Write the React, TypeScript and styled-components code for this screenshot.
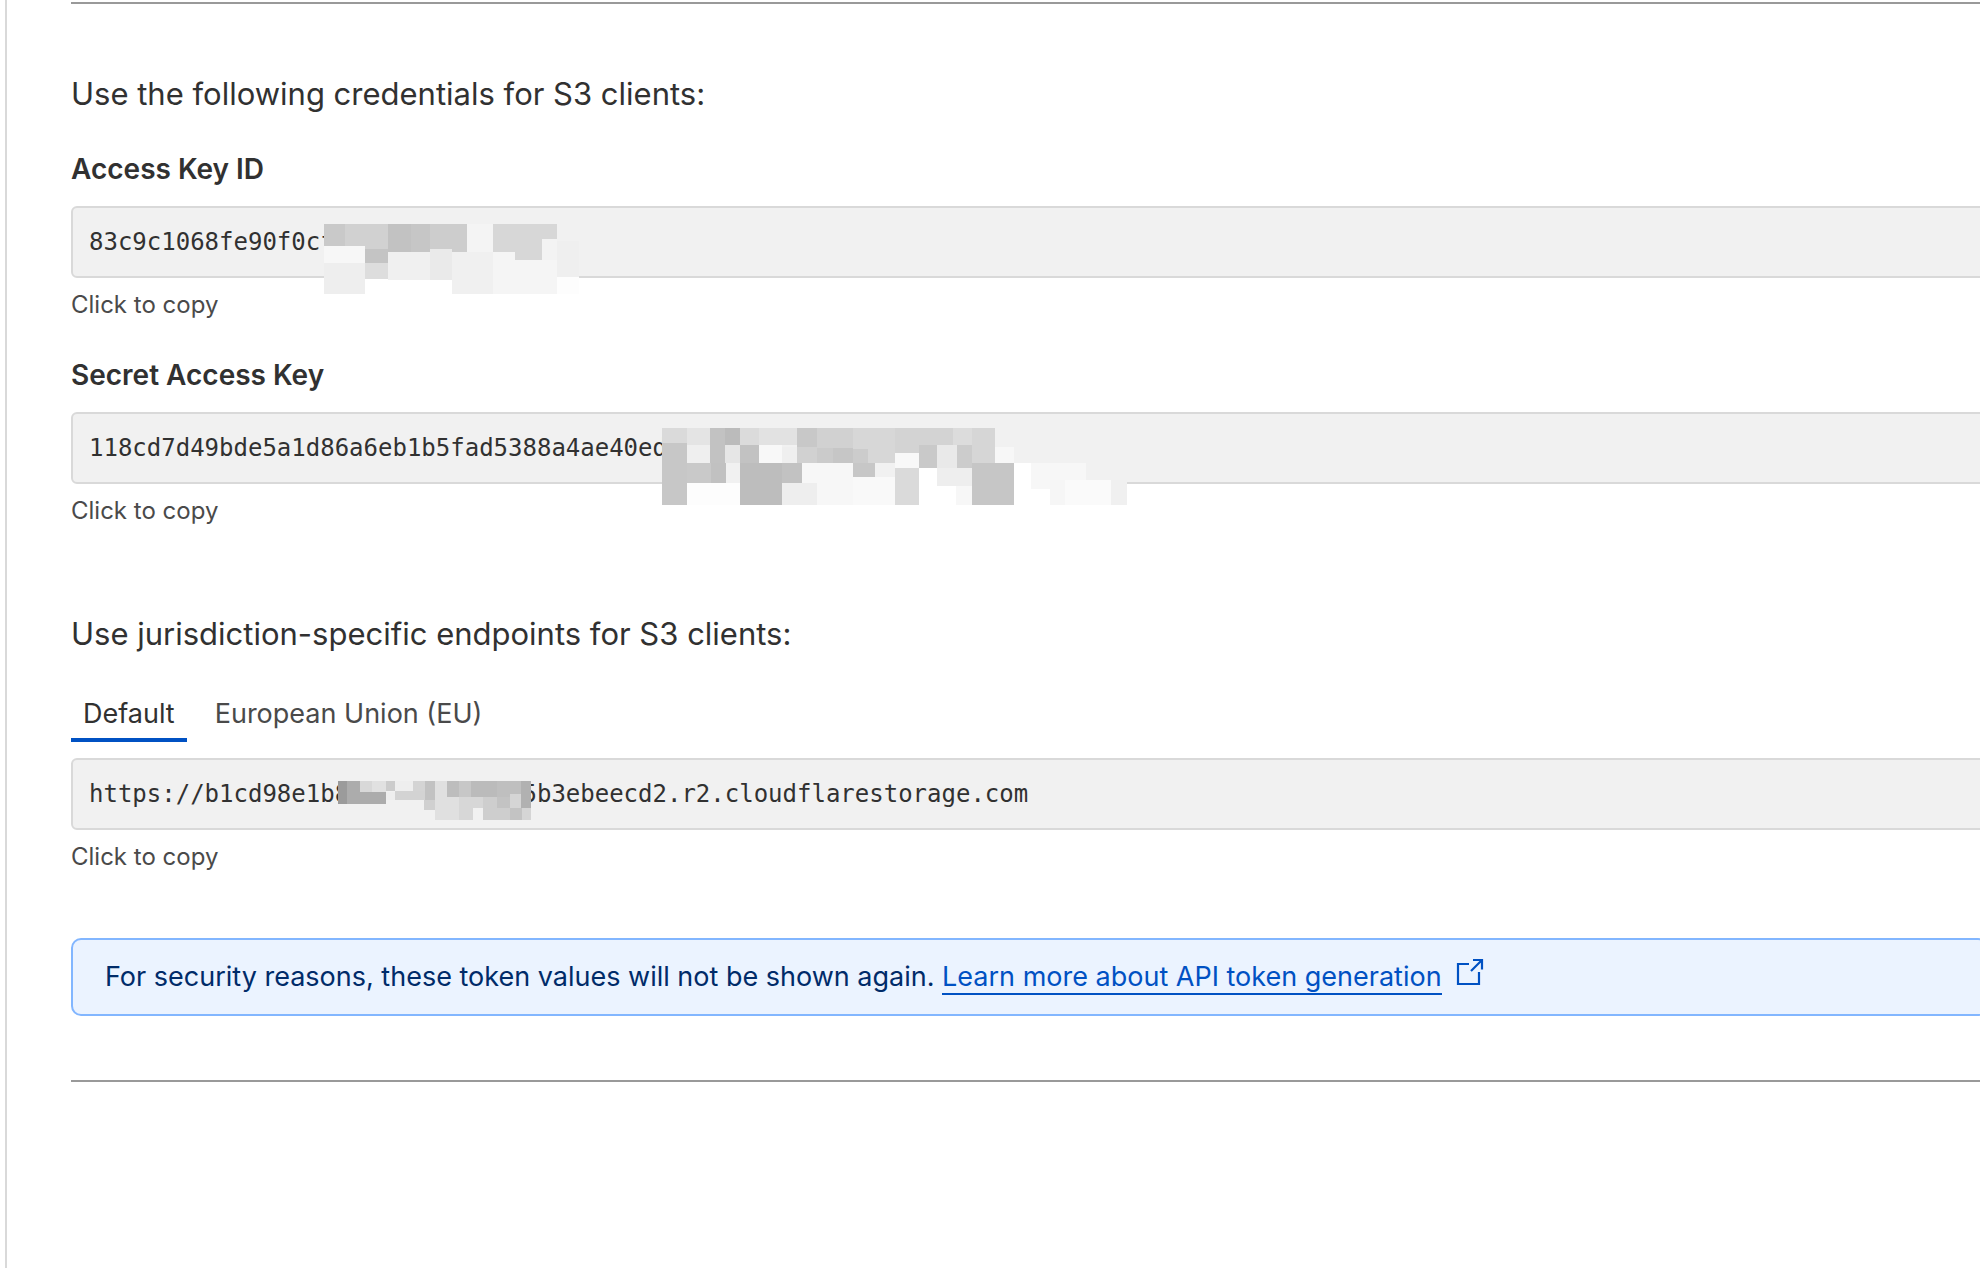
import React, { useState } from 'react';
import styled, { createGlobalStyle } from 'styled-components';

const sans = `Inter, 'Liberation Sans', sans-serif`;
const mono = `'DejaVu Sans Mono', 'Liberation Mono', monospace`;

const GlobalStyle = createGlobalStyle`
  *, *::before, *::after { box-sizing: border-box; }
  body {
    margin: 0;
    background: #ffffff;
    color: #313131;
    font-family: ${sans};
    overflow-x: hidden;
  }
`;

const Page = styled.main`
  margin-left: 5px;
  min-height: 100vh;
  padding: 2px 0 0 64px;
  border-left: 2px solid #d9d9d9;
`;

const Rule = styled.hr`
  height: 2px;
  margin: 0;
  border: 0;
  background: #999999;
`;

const Section = styled.section<{ $space: number }>`
  display: flex;
  flex-direction: column;
  padding-top: ${(p) => p.$space}px;
`;

const Heading = styled.h2`
  margin: 0;
  font-size: 31px;
  font-weight: 400;
  line-height: 48px;
`;

const Field = styled.div`
  display: flex;
  flex-direction: column;
  margin-top: 30px;
`;

const FieldLabel = styled.label`
  font-size: 28px;
  font-weight: 600;
  line-height: 42px;
`;

const ValueBox = styled.div`
  position: relative;
  margin-top: 16px;
`;

const ValueInput = styled.input`
  display: block;
  width: calc(100% + 8px);
  height: 72px;
  padding: 0 16px;
  border: 2px solid #d9d9d9;
  border-radius: 6px;
  background: #f1f1f1;
  color: #313131;
  font-family: ${mono};
  font-size: 24px;
  outline: none;
`;

const Mosaic = styled.svg`
  position: absolute;
  left: 0;
  top: 0;
  overflow: visible;
  pointer-events: none;
`;

const CopyButton = styled.button`
  align-self: flex-start;
  margin-top: 8px;
  padding: 0;
  border: 0;
  background: none;
  color: #4a4a4a;
  font-family: ${sans};
  font-size: 24px;
  line-height: 38px;
  cursor: pointer;
`;

const Tabs = styled.div`
  display: flex;
  gap: 16px;
  margin-top: 32px;
`;

const Tab = styled.button<{ $active: boolean }>`
  padding: 6px 12px;
  border: 0;
  border-bottom: 4px solid ${(p) => (p.$active ? '#0051c3' : 'transparent')};
  background: none;
  color: ${(p) => (p.$active ? '#313131' : '#4a4a4a')};
  font-family: ${sans};
  font-size: 27px;
  line-height: 36px;
  cursor: pointer;
`;

const Notice = styled.p`
  width: calc(100% + 8px);
  margin: 62px 0 64px;
  padding: 16px 32px;
  border: 2px solid #82b6ff;
  border-radius: 10px;
  background: #ebf3ff;
  color: #002b69;
  font-size: 27px;
  line-height: 42px;
`;

const NoticeLink = styled.a`
  color: #0051c3;
  text-decoration: none;
  span { border-bottom: 2px solid #0051c3; }
  svg { margin-left: 14px; }
`;

type Cell = [number, number, number, number, string];

const accessCells: Cell[] = [
  [324, 224, 21, 22, '#c9c9c9'], [345, 224, 43, 25, '#d1d1d1'], [388, 224, 23, 28, '#c2c2c2'],
  [411, 224, 19, 28, '#c6c6c6'], [430, 224, 37, 28, '#cdcdcd'], [467, 224, 26, 28, '#f4f4f4'],
  [493, 224, 64, 28, '#d7d7d7'], [324, 246, 41, 17, '#f7f7f7'], [365, 249, 23, 14, '#c4c4c4'],
  [324, 263, 41, 31, '#eeeeee'], [365, 263, 23, 16, '#dddddd'], [388, 252, 42, 28, '#f0f0f0'],
  [430, 249, 22, 31, '#eaeaea'], [452, 252, 41, 42, '#f0f0f0'], [493, 252, 64, 42, '#f5f5f5'],
  [515, 239, 27, 21, '#d7d7d7'], [542, 239, 15, 21, '#f3f3f3'], [557, 241, 22, 36, '#efefef'],
  [557, 277, 22, 17, '#fdfdfd'],
];

const secretCells: Cell[] = [
  [662, 428, 25, 15, '#dadada'], [687, 428, 23, 17, '#e4e4e4'], [710, 428, 15, 35, '#c2c2c2'],
  [725, 428, 15, 17, '#bbbbbb'], [740, 428, 19, 17, '#dbdbdb'], [759, 428, 38, 17, '#e2e2e2'],
  [797, 428, 20, 19, '#c8c8c8'], [817, 428, 36, 20, '#d1d1d1'], [853, 428, 42, 35, '#d7d7d7'],
  [895, 428, 58, 25, '#d3d3d3'], [953, 428, 19, 17, '#dcdcdc'], [972, 428, 23, 35, '#d6d6d6'],
  [662, 443, 25, 62, '#c7c7c7'], [687, 445, 23, 18, '#efefef'], [725, 445, 15, 18, '#e6e6e6'],
  [740, 445, 19, 18, '#c2c2c2'], [759, 445, 23, 18, '#f8f8f8'], [782, 447, 15, 16, '#efefef'],
  [797, 447, 20, 16, '#d1d1d1'], [817, 448, 16, 15, '#cbcbcb'], [833, 448, 20, 15, '#c6c6c6'],
  [853, 449, 15, 14, '#cccccc'], [868, 449, 27, 14, '#d7d7d7'], [895, 453, 24, 15, '#f8f8f8'],
  [919, 445, 18, 23, '#c9c9c9'], [937, 445, 20, 23, '#e9e9e9'], [957, 445, 15, 23, '#cccccc'],
  [995, 447, 19, 16, '#f7f7f7'], [687, 463, 24, 20, '#c9c9c9'], [711, 463, 15, 20, '#c1c1c1'],
  [726, 463, 14, 20, '#f1f1f1'], [740, 463, 42, 42, '#bdbdbd'], [782, 463, 20, 20, '#c2c2c2'],
  [802, 463, 51, 42, '#f7f7f7'], [853, 463, 22, 14, '#c7c7c7'], [875, 463, 20, 14, '#f1f1f1'],
  [853, 477, 42, 28, '#f9f9f9'], [687, 483, 53, 22, '#fdfdfd'], [782, 483, 35, 22, '#eeeeee'],
  [895, 468, 24, 37, '#dadada'], [919, 468, 18, 37, '#ffffff'], [937, 468, 35, 18, '#eeeeee'],
  [937, 486, 19, 19, '#ffffff'], [956, 486, 16, 19, '#f7f7f7'], [972, 463, 42, 42, '#c6c6c6'],
  [1014, 463, 17, 42, '#ffffff'], [1031, 463, 55, 26, '#f7f7f7'], [1031, 489, 19, 16, '#ffffff'],
  [1050, 480, 15, 25, '#f6f6f6'], [1065, 480, 46, 25, '#fafafa'], [1111, 480, 16, 25, '#f0f0f0'],
];

const endpointCells: Cell[] = [
  [338, 781, 9, 23, '#9b9b9b'], [347, 781, 13, 11, '#acacac'], [360, 781, 12, 11, '#d8d8d8'],
  [372, 781, 14, 11, '#e1e1e1'], [386, 781, 9, 10, '#cccccc'], [395, 781, 18, 10, '#eeeeee'],
  [413, 781, 12, 10, '#d4d4d4'], [425, 781, 10, 19, '#c2c2c2'], [435, 781, 12, 39, '#e0e0e0'],
  [447, 781, 12, 16, '#bdbdbd'], [459, 781, 12, 16, '#c7c7c7'], [471, 781, 26, 16, '#bbbbbb'],
  [497, 781, 24, 16, '#bfbfbf'], [521, 781, 10, 27, '#b1b1b1'], [347, 792, 39, 12, '#acacac'],
  [386, 792, 9, 8, '#eeeeee'], [395, 791, 30, 9, '#d3d3d3'], [424, 800, 11, 10, '#d0d0d0'],
  [447, 797, 12, 23, '#e0e0e0'], [459, 797, 38, 11, '#d7d7d7'], [459, 808, 14, 12, '#d7d7d7'],
  [473, 808, 10, 12, '#f1f1f1'], [483, 797, 14, 23, '#cecece'], [497, 797, 13, 11, '#c3c3c3'],
  [510, 794, 11, 14, '#d5d5d5'], [497, 808, 13, 12, '#cecece'], [510, 808, 12, 12, '#c3c3c3'],
  [522, 808, 9, 12, '#d5d5d5'],
];

function Redaction({ cells, y }: { cells: Cell[]; y: number }) {
  return (
    <Mosaic width="1100" height="90" viewBox={`71 ${y} 1100 90`} shapeRendering="crispEdges" aria-hidden="true">
      {cells.map(([cx, cy, w, h, fill], i) => (
        <rect key={i} x={cx} y={cy} width={w} height={h} fill={fill} />
      ))}
    </Mosaic>
  );
}

function Value({ id, value, cells, y, label }: { id: string; value: string; cells: Cell[]; y: number; label?: string }) {
  return (
    <>
      <ValueBox>
        <ValueInput id={id} aria-label={label} readOnly value={value} />
        <Redaction cells={cells} y={y} />
      </ValueBox>
      <CopyButton type="button" onClick={() => navigator.clipboard?.writeText(value)}>Click to copy</CopyButton>
    </>
  );
}

export default function App() {
  const [tab, setTab] = useState('Default');
  return (
    <>
      <GlobalStyle />
      <Page>
        <Rule />
        <Section $space={66}>
          <Heading>Use the following credentials for S3 clients:</Heading>
          <Field>
            <FieldLabel htmlFor="access">Access Key ID</FieldLabel>
            <Value id="access" value="83c9c1068fe90f0cf" cells={accessCells} y={206} />
          </Field>
          <Field>
            <FieldLabel htmlFor="secret">Secret Access Key</FieldLabel>
            <Value id="secret" value="118cd7d49bde5a1d86a6eb1b5fad5388a4ae40ed" cells={secretCells} y={412} />
          </Field>
        </Section>
        <Section $space={80}>
          <Heading>Use jurisdiction-specific endpoints for S3 clients:</Heading>
          <Tabs role="tablist">
            {['Default', 'European Union (EU)'].map((name) => (
              <Tab key={name} type="button" role="tab" aria-selected={tab === name} $active={tab === name} onClick={() => setTab(name)}>
                {name}
              </Tab>
            ))}
          </Tabs>
          <Value id="endpoint" label="Endpoint" value="https://b1cd98e1b8            5b3ebeecd2.r2.cloudflarestorage.com" cells={endpointCells} y={758} />
        </Section>
        <Notice>
          For security reasons, these token values will not be shown again.{' '}
          <NoticeLink href="#token-generation">
            <span>Learn more about API token generation</span>
            <svg width="28" height="28" viewBox="0 0 28 28" fill="none" stroke="currentColor" strokeWidth="2.2" aria-hidden="true">
              <path d="M13 6H2v20h21V14M17 2h9v9.5M26 2L15 13" />
            </svg>
          </NoticeLink>
        </Notice>
        <Rule />
      </Page>
    </>
  );
}
